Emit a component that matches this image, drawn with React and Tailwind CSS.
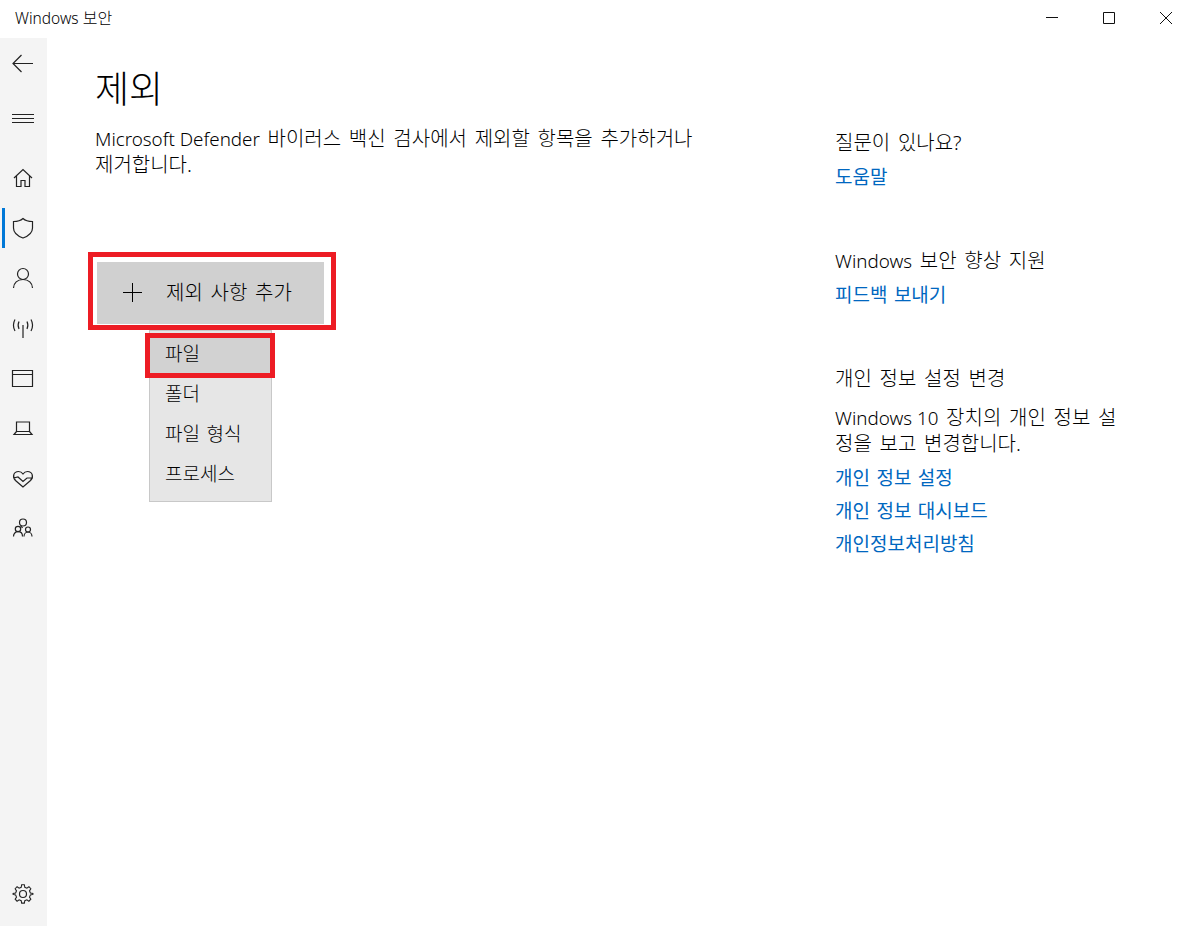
function NavIcon({ children, active, className = '' }) {
  return (
    <div className={`relative flex h-10 w-full items-center justify-center ${className}`}>
      {active && <div className="absolute left-[2px] top-0 h-10 w-[3px] bg-[#0078d7]" />}
      <svg width="24" height="24" viewBox="0 0 24 24" fill="none" stroke="#222" strokeWidth="1.2" className="ml-[-1px]">
        {children}
      </svg>
    </div>
  );
}

function Sidebar() {
  return (
    <aside className="flex w-[47px] shrink-0 flex-col bg-[#f4f4f4] pt-[5px]">
      <NavIcon>
        <path d="M22 12.500H2M10.500 4L2 12.500L10.500 21" />
      </NavIcon>
      <NavIcon className="mt-[15px]">
        <path d="M1 8.500H23M1 12.500H23M1 16.500H23" />
      </NavIcon>
      <NavIcon className="mt-[20px]">
        <path d="M3 12L12 3.500L21 12M5.500 10V20.500H10V14.500H14V20.500H18.500V10" />
      </NavIcon>
      <NavIcon active className="mt-[10px]">
        <path d="M12 2.500C9.500 4.800 6 5.500 2.500 5.500V12C2.500 16.500 6.500 20 12 22C17.500 20 21.500 16.500 21.500 12V5.500C18 5.500 14.500 4.800 12 2.500Z" />
      </NavIcon>
      <NavIcon className="mt-[10px]">
        <circle cx="12" cy="8" r="5.500" />
        <path d="M2.500 22C2.500 17 6.500 13.500 12 13.500C17.500 13.500 21.500 17 21.500 22" />
      </NavIcon>
      <NavIcon className="mt-[10px]">
        <path d="M12 9V22M8 5.500C6.800 8 6.800 10.500 8 13M16 5.500C17.200 8 17.200 10.500 16 13M4 3.500C1.800 7.500 1.800 11 4 15M20 3.500C22.200 7.500 22.200 11 20 15" />
      </NavIcon>
      <NavIcon className="mt-[10px]">
        <path d="M1.500 4.500H21.500V20.500H1.500ZM1.500 8.500H21.500" />
      </NavIcon>
      <NavIcon className="mt-[10px]">
        <path d="M5.500 6H18.500V15.500H5.500ZM5.500 15.500L3 18.500H21L18.500 15.500" />
      </NavIcon>
      <NavIcon className="mt-[10px]">
        <path d="M12 21L4.500 14.500C1 11 2.500 5.500 7.500 5.500C9.500 5.500 11 6.500 12 8C13 6.500 14.500 5.500 16.500 5.500C21.500 5.500 23 11 19.500 14.500L12 21ZM2.500 12L7 11L12 15.500L16 12H22" />
      </NavIcon>
      <NavIcon className="mt-[10px]">
        <circle cx="12" cy="6.500" r="3.500" />
        <circle cx="7" cy="13" r="2.700" />
        <circle cx="17" cy="13.500" r="2.500" />
        <path d="M2.500 20.500C2.500 17.500 4.500 15.700 7 15.700C9.500 15.700 11.500 17.500 11.500 20.500M13 20.500C13 18 14.700 16 17 16C19.300 16 21 18 21 20.500M9.500 10C10.500 10.500 11 11 11.500 12" />
      </NavIcon>
      <div className="mt-auto mb-[12px]">
        <NavIcon>
          <circle cx="12" cy="12" r="3.500" />
          <path d="M10.500 3H13.500L14 5.700L16.300 6.700L18.600 5.100L20.700 7.300L19.200 9.600L20.200 11.900L23 12.500V13.500L20.200 14.100L19.200 16.400L20.700 18.700L18.600 20.900L16.300 19.300L14 20.300L13.500 23H10.500L10 20.300L7.700 19.300L5.400 20.900L3.300 18.700L4.800 16.400L3.800 14.100L1 13.500V12.500L3.800 11.900L4.800 9.600L3.300 7.300L5.400 5.100L7.700 6.700L10 5.700Z" transform="translate(1.200 0) scale(0.9 0.92)" />
        </NavIcon>
      </div>
    </aside>
  );
}

// latin runs are set a bit smaller than the hangul around them
function Latin({ children }) {
  return <span className="text-[18.8px] [word-spacing:0px]">{children}</span>;
}

function SideHeading({ children, className = '' }) {
  return <h2 className={`text-[20px] leading-[25px] font-light [word-spacing:2.5px] ${className}`}>{children}</h2>;
}

function SideLink({ children, className = '' }) {
  return <a className={`block text-[19px] leading-[25px] text-[#0067c0] [word-spacing:1.5px] ${className}`}>{children}</a>;
}

export default function App() {
  return (
    <div
      className="flex h-[926px] w-[1193px] flex-col overflow-hidden bg-white text-black"
      style={{ fontFamily: '"Noto Sans", "Noto Sans CJK KR", sans-serif' }}
    >
      {/* Title bar */}
      <header className="flex h-[38px] shrink-0 items-start justify-between">
        <span className="pl-[15px] pt-[8px] text-[16px] leading-[20px] font-light">
          <span className="text-[15.5px]">Windows</span> 보안
        </span>
        <div className="flex pt-[12px]">
          <svg width="58" height="12" viewBox="0 0 58 12" fill="none" stroke="#111" strokeWidth="1">
            <path d="M26 5.500H38" />
          </svg>
          <svg width="57" height="12" viewBox="0 0 57 12" fill="none" stroke="#111" strokeWidth="1">
            <path d="M25.500 .500H36.500V11.500H25.500Z" />
          </svg>
          <svg width="58" height="12" viewBox="0 0 58 12" fill="none" stroke="#111" strokeWidth="1">
            <path d="M25 0L37 12M37 0L25 12" />
          </svg>
        </div>
      </header>

      <div className="flex min-h-0 flex-1">
        <Sidebar />

        <main className="flex min-w-0 flex-1">
          {/* Main column */}
          <div className="w-[788px] shrink-0 pl-[48px]">
            <h1 className="pt-[26px] text-[37px] leading-[50px] font-light">제외</h1>
            <p className="mt-[12px] w-[610px] text-[20px] leading-[25px] font-light [word-spacing:2.5px]">
              <Latin>Microsoft Defender</Latin> 바이러스 백신 검사에서 제외할 항목을 추가하거나 제거합니다.
            </p>

            <div className="relative mt-[85px] ml-[2px] w-[227px]">
              <div className="absolute -left-[9px] -top-[10px] h-[78px] w-[248px] border-[5px] border-[#ed1c24]" />
              <button className="flex h-[62px] w-[227px] items-center bg-[#d0d0d0] pl-[25px] text-[20px] font-light [word-spacing:2.5px]">
                <svg width="22" height="22" viewBox="0 0 22 22" fill="none" stroke="#000" strokeWidth="1" className="shrink-0">
                  <path d="M10.500 1V20M1 10.500H20" />
                </svg>
                <span className="ml-[22px]">제외 사항 추가</span>
              </button>

              <div className="relative mt-[6px] ml-[52px] h-[172px] w-[123px] border border-[#c8c8c8] bg-[#e6e6e6] pt-[3px]">
                <div className="absolute -left-[5px] top-[2px] h-[45px] w-[130px] border-[5px] border-[#ed1c24] bg-[#d2d2d2]" />
                <ul className="relative text-[19px] font-light [word-spacing:1.5px]">
                  <li className="flex h-[40px] items-center pl-[15px]">파일</li>
                  <li className="flex h-[40px] items-center pl-[15px]">폴더</li>
                  <li className="flex h-[40px] items-center pl-[15px]">파일 형식</li>
                  <li className="flex h-[40px] items-center pl-[15px]">프로세스</li>
                </ul>
              </div>
            </div>
          </div>

          {/* Right column */}
          <div className="flex-1 pt-[92px]">
            <SideHeading>질문이 있나요?</SideHeading>
            <SideLink className="mt-[10px]">도움말</SideLink>

            <SideHeading className="mt-[58px]">
              <Latin>Windows</Latin> 보안 향상 지원
            </SideHeading>
            <SideLink className="mt-[9px]">피드백 보내기</SideLink>

            <SideHeading className="mt-[58px]">개인 정보 설정 변경</SideHeading>
            <p className="mt-[14px] w-[290px] text-[20px] leading-[25px] font-light break-all [word-spacing:2.5px]">
              <Latin>Windows 10</Latin> 장치의 개인 정보 설정을 보고 변경합니다.
            </p>
            <SideLink className="mt-[10px]">개인 정보 설정</SideLink>
            <SideLink className="mt-[8px]">개인 정보 대시보드</SideLink>
            <SideLink className="mt-[8px]">개인정보처리방침</SideLink>
          </div>
        </main>
      </div>
    </div>
  );
}
